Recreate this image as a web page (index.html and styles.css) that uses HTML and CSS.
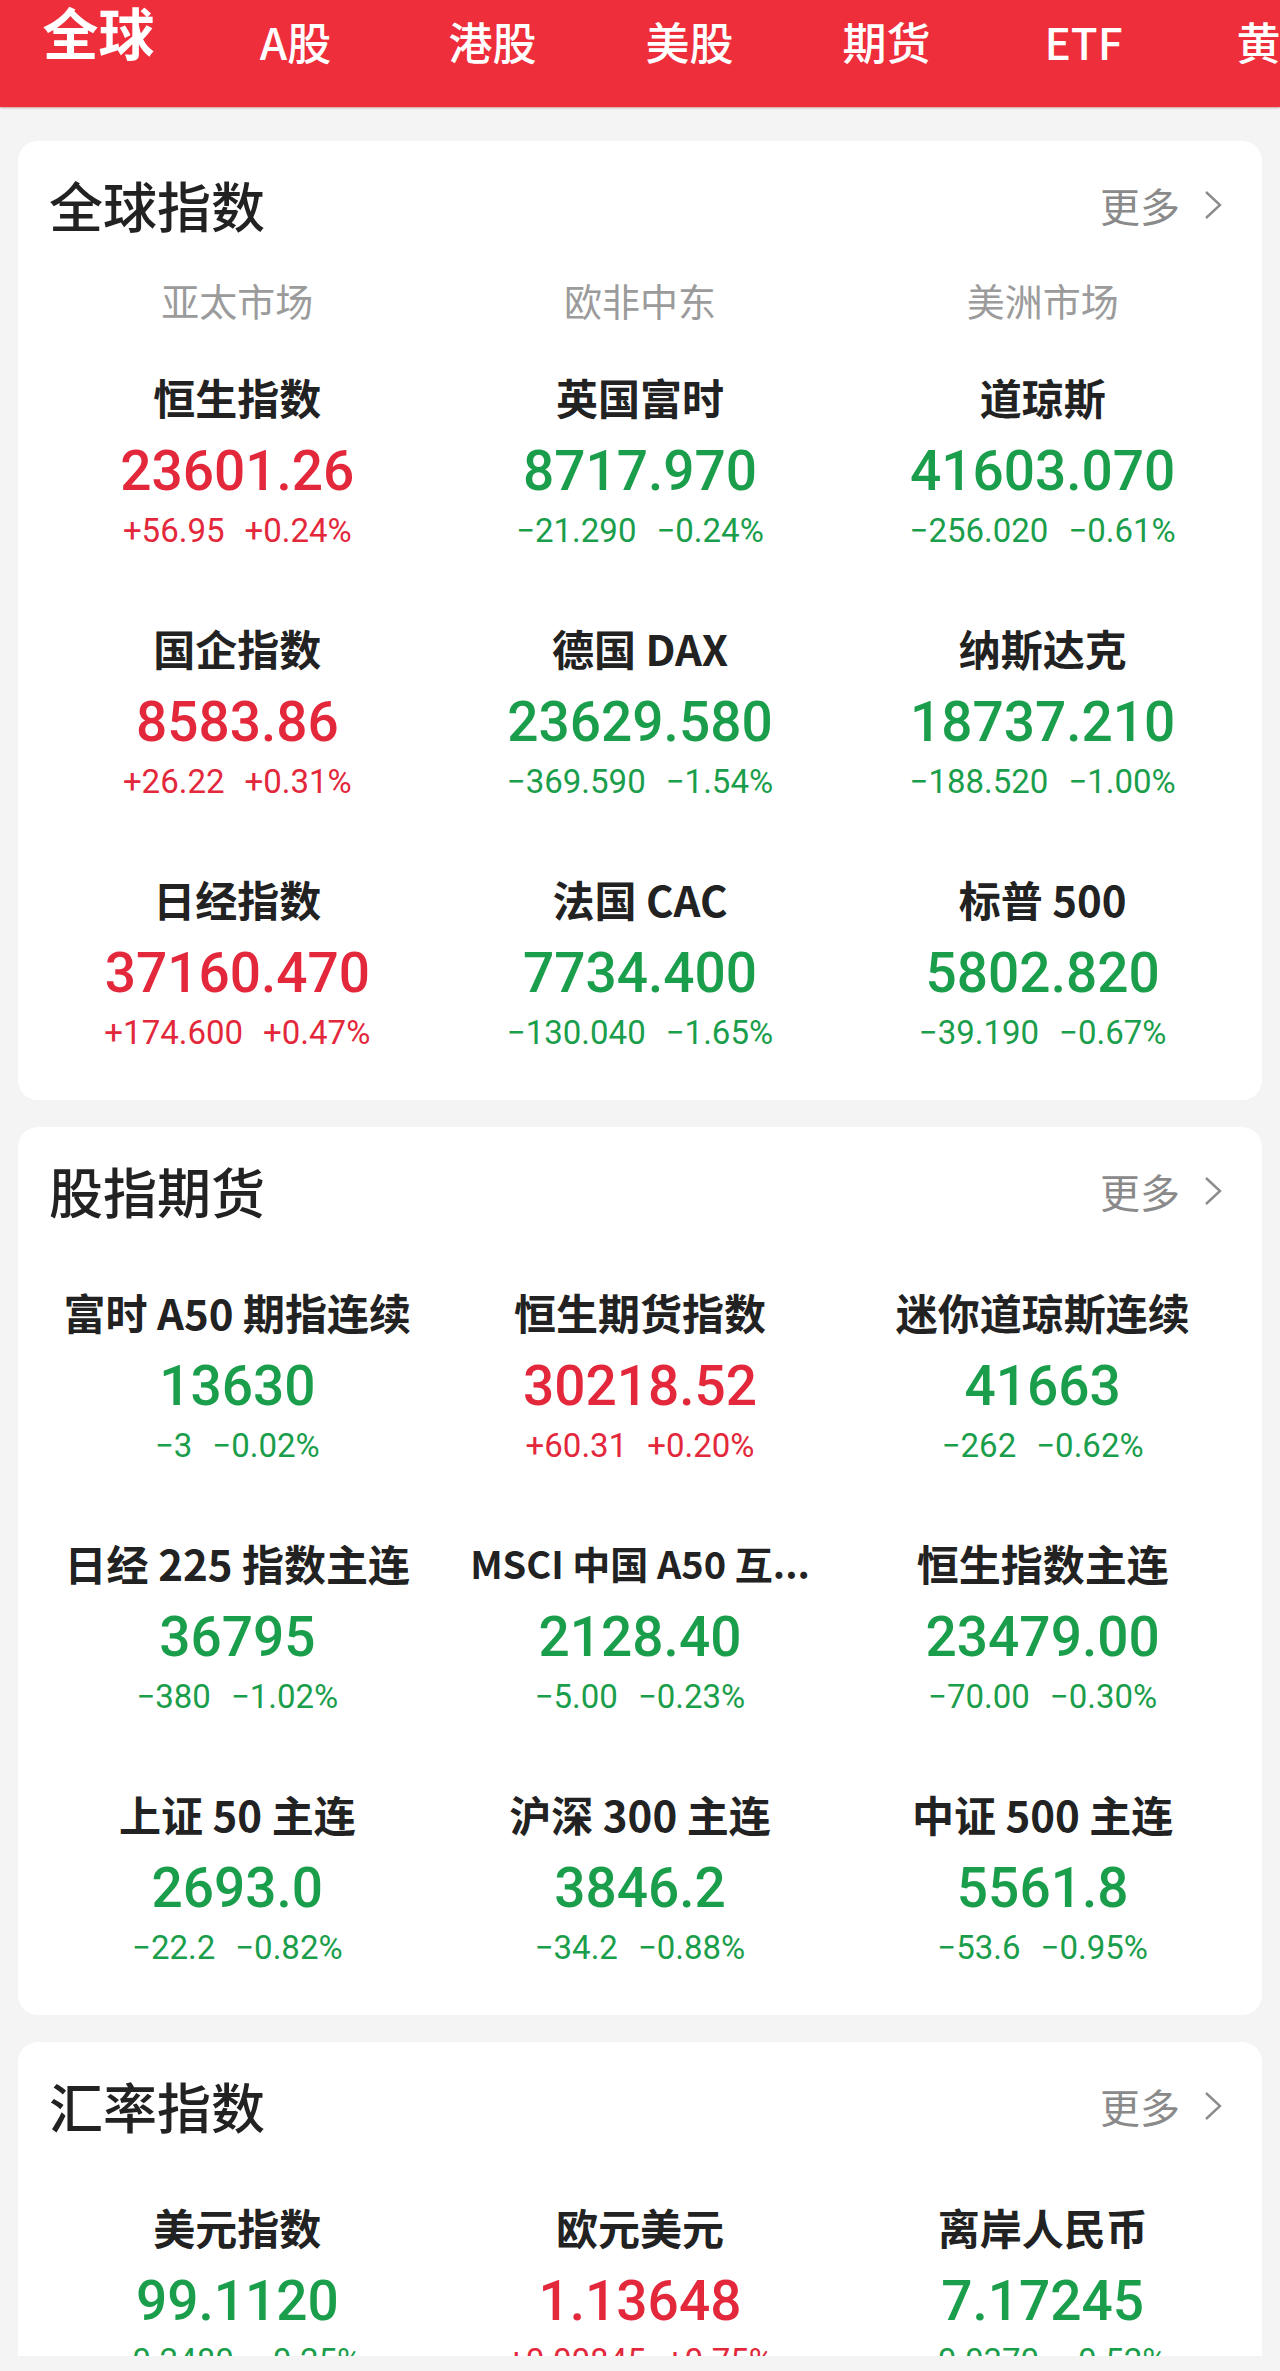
FILE: index.html
```html
<!DOCTYPE html>
<html>
<head>
  <meta charset="utf-8">
  <title>全球行情</title>
  <link rel="stylesheet" href="styles.css">
</head>
<body>
  <div class="page">
    <div class="tabs">
      <span class="tab active">全球</span>
      <span class="tab">A股</span>
      <span class="tab">港股</span>
      <span class="tab">美股</span>
      <span class="tab">期货</span>
      <span class="tab">ETF</span>
      <span class="tab">黄金</span>
    </div>

    <div class="card first">
      <div class="card-head">
        <h2>全球指数</h2>
        <span class="more">更多
          <svg width="22" height="30" viewBox="0 0 22 30"><polyline points="4,2 18,15 4,28" fill="none" stroke="#8c8c8c" stroke-width="2.4"/></svg>
        </span>
      </div>
      <div class="markets">
        <span>亚太市场</span>
        <span>欧非中东</span>
        <span>美洲市场</span>
      </div>
      <div class="grid">
        <div class="cell up">
          <div class="name">恒生指数</div>
          <div class="value">23601.26</div>
          <div class="change"><span>+56.95</span><span>+0.24%</span></div>
        </div>
        <div class="cell down">
          <div class="name">英国富时</div>
          <div class="value">8717.970</div>
          <div class="change"><span>−21.290</span><span>−0.24%</span></div>
        </div>
        <div class="cell down">
          <div class="name">道琼斯</div>
          <div class="value">41603.070</div>
          <div class="change"><span>−256.020</span><span>−0.61%</span></div>
        </div>
        <div class="cell up">
          <div class="name">国企指数</div>
          <div class="value">8583.86</div>
          <div class="change"><span>+26.22</span><span>+0.31%</span></div>
        </div>
        <div class="cell down">
          <div class="name">德国 DAX</div>
          <div class="value">23629.580</div>
          <div class="change"><span>−369.590</span><span>−1.54%</span></div>
        </div>
        <div class="cell down">
          <div class="name">纳斯达克</div>
          <div class="value">18737.210</div>
          <div class="change"><span>−188.520</span><span>−1.00%</span></div>
        </div>
        <div class="cell up">
          <div class="name">日经指数</div>
          <div class="value">37160.470</div>
          <div class="change"><span>+174.600</span><span>+0.47%</span></div>
        </div>
        <div class="cell down">
          <div class="name">法国 CAC</div>
          <div class="value">7734.400</div>
          <div class="change"><span>−130.040</span><span>−1.65%</span></div>
        </div>
        <div class="cell down">
          <div class="name">标普 500</div>
          <div class="value">5802.820</div>
          <div class="change"><span>−39.190</span><span>−0.67%</span></div>
        </div>
      </div>
    </div>

    <div class="card">
      <div class="card-head">
        <h2>股指期货</h2>
        <span class="more">更多
          <svg width="22" height="30" viewBox="0 0 22 30"><polyline points="4,2 18,15 4,28" fill="none" stroke="#8c8c8c" stroke-width="2.4"/></svg>
        </span>
      </div>
      <div class="grid">
        <div class="cell down">
          <div class="name">富时 A50 期指连续</div>
          <div class="value">13630</div>
          <div class="change"><span>−3</span><span>−0.02%</span></div>
        </div>
        <div class="cell up">
          <div class="name">恒生期货指数</div>
          <div class="value">30218.52</div>
          <div class="change"><span>+60.31</span><span>+0.20%</span></div>
        </div>
        <div class="cell down">
          <div class="name">迷你道琼斯连续</div>
          <div class="value">41663</div>
          <div class="change"><span>−262</span><span>−0.62%</span></div>
        </div>
        <div class="cell down">
          <div class="name">日经 225 指数主连</div>
          <div class="value">36795</div>
          <div class="change"><span>−380</span><span>−1.02%</span></div>
        </div>
        <div class="cell down">
          <div class="name small">MSCI 中国 A50 互...</div>
          <div class="value">2128.40</div>
          <div class="change"><span>−5.00</span><span>−0.23%</span></div>
        </div>
        <div class="cell down">
          <div class="name">恒生指数主连</div>
          <div class="value">23479.00</div>
          <div class="change"><span>−70.00</span><span>−0.30%</span></div>
        </div>
        <div class="cell down">
          <div class="name">上证 50 主连</div>
          <div class="value">2693.0</div>
          <div class="change"><span>−22.2</span><span>−0.82%</span></div>
        </div>
        <div class="cell down">
          <div class="name">沪深 300 主连</div>
          <div class="value">3846.2</div>
          <div class="change"><span>−34.2</span><span>−0.88%</span></div>
        </div>
        <div class="cell down">
          <div class="name">中证 500 主连</div>
          <div class="value">5561.8</div>
          <div class="change"><span>−53.6</span><span>−0.95%</span></div>
        </div>
      </div>
    </div>

    <div class="card">
      <div class="card-head">
        <h2>汇率指数</h2>
        <span class="more">更多
          <svg width="22" height="30" viewBox="0 0 22 30"><polyline points="4,2 18,15 4,28" fill="none" stroke="#8c8c8c" stroke-width="2.4"/></svg>
        </span>
      </div>
      <div class="grid">
        <div class="cell down">
          <div class="name">美元指数</div>
          <div class="value">99.1120</div>
          <div class="change"><span>−0.2480</span><span>−0.25%</span></div>
        </div>
        <div class="cell up">
          <div class="name">欧元美元</div>
          <div class="value">1.13648</div>
          <div class="change"><span>+0.00845</span><span>+0.75%</span></div>
        </div>
        <div class="cell down">
          <div class="name">离岸人民币</div>
          <div class="value">7.17245</div>
          <div class="change"><span>−0.0370</span><span>−0.52%</span></div>
        </div>
      </div>
    </div>
  </div>
</body>
</html>
```

FILE: styles.css
```css
body {
  margin: 0;
  background-color: #f4f4f4;
  font-family: "Noto Sans CJK SC", "Noto Sans", sans-serif;
  overflow: hidden;
}

.page {
  height: 2356px;
  overflow: hidden;
}

/* Top tab bar */
.tabs {
  display: flex;
  align-items: flex-start;
  height: 107px;
  background-color: #ee2e3b;
  box-shadow: 0 1px 2px rgba(120, 0, 0, 0.35);
  white-space: nowrap;
  overflow: hidden;
}

.tab {
  flex: 0 0 197px;
  text-align: center;
  color: #fff;
  font-size: 44px;
  font-weight: 500;
  line-height: 1;
  margin-top: 19px;
}

.tab.active {
  font-size: 56px;
  font-weight: 700;
  margin-top: 3px;
}

/* Cards */
.card {
  background-color: #fff;
  margin: 27px 18px 0;
  border-radius: 20px;
}

.card.first {
  margin-top: 34px;
}

.card-head {
  display: flex;
  justify-content: space-between;
  align-items: center;
  padding: 36px 38px 0 31px;
  height: 56px;
}

.card-head h2 {
  margin: 0;
  font-size: 54px;
  font-weight: 500;
  line-height: 56px;
  color: #222;
}

.more {
  display: flex;
  align-items: center;
  gap: 22px;
  font-size: 40px;
  line-height: 56px;
  color: #8a8a8a;
}

.markets {
  display: grid;
  grid-template-columns: repeat(3, 1fr);
  padding: 45px 18px 0;
  font-size: 38px;
  line-height: 44px;
  color: #9b9b9b;
  text-align: center;
}

.grid {
  display: grid;
  grid-template-columns: repeat(3, 1fr);
  row-gap: 75px;
  padding: 71px 18px 47px;
}

.markets + .grid {
  padding-top: 53px;
}

.cell {
  height: 176px;
  text-align: center;
}

.name {
  font-size: 42px;
  font-weight: 700;
  line-height: 44px;
  color: #222;
  white-space: nowrap;
}

.name.small {
  font-size: 38px;
}

.value {
  margin-top: 16px;
  font-family: Roboto, "Liberation Sans", sans-serif;
  font-size: 55px;
  font-weight: 500;
  line-height: 72px;
}

.change {
  margin-top: 4px;
  font-family: Roboto, "Liberation Sans", sans-serif;
  font-size: 33px;
  line-height: 40px;
}

.change span + span {
  margin-left: 20px;
}

.up {
  color: #e3283b;
}

.down {
  color: #1b9e4b;
}

.up .name,
.down .name {
  color: #222;
}
```
